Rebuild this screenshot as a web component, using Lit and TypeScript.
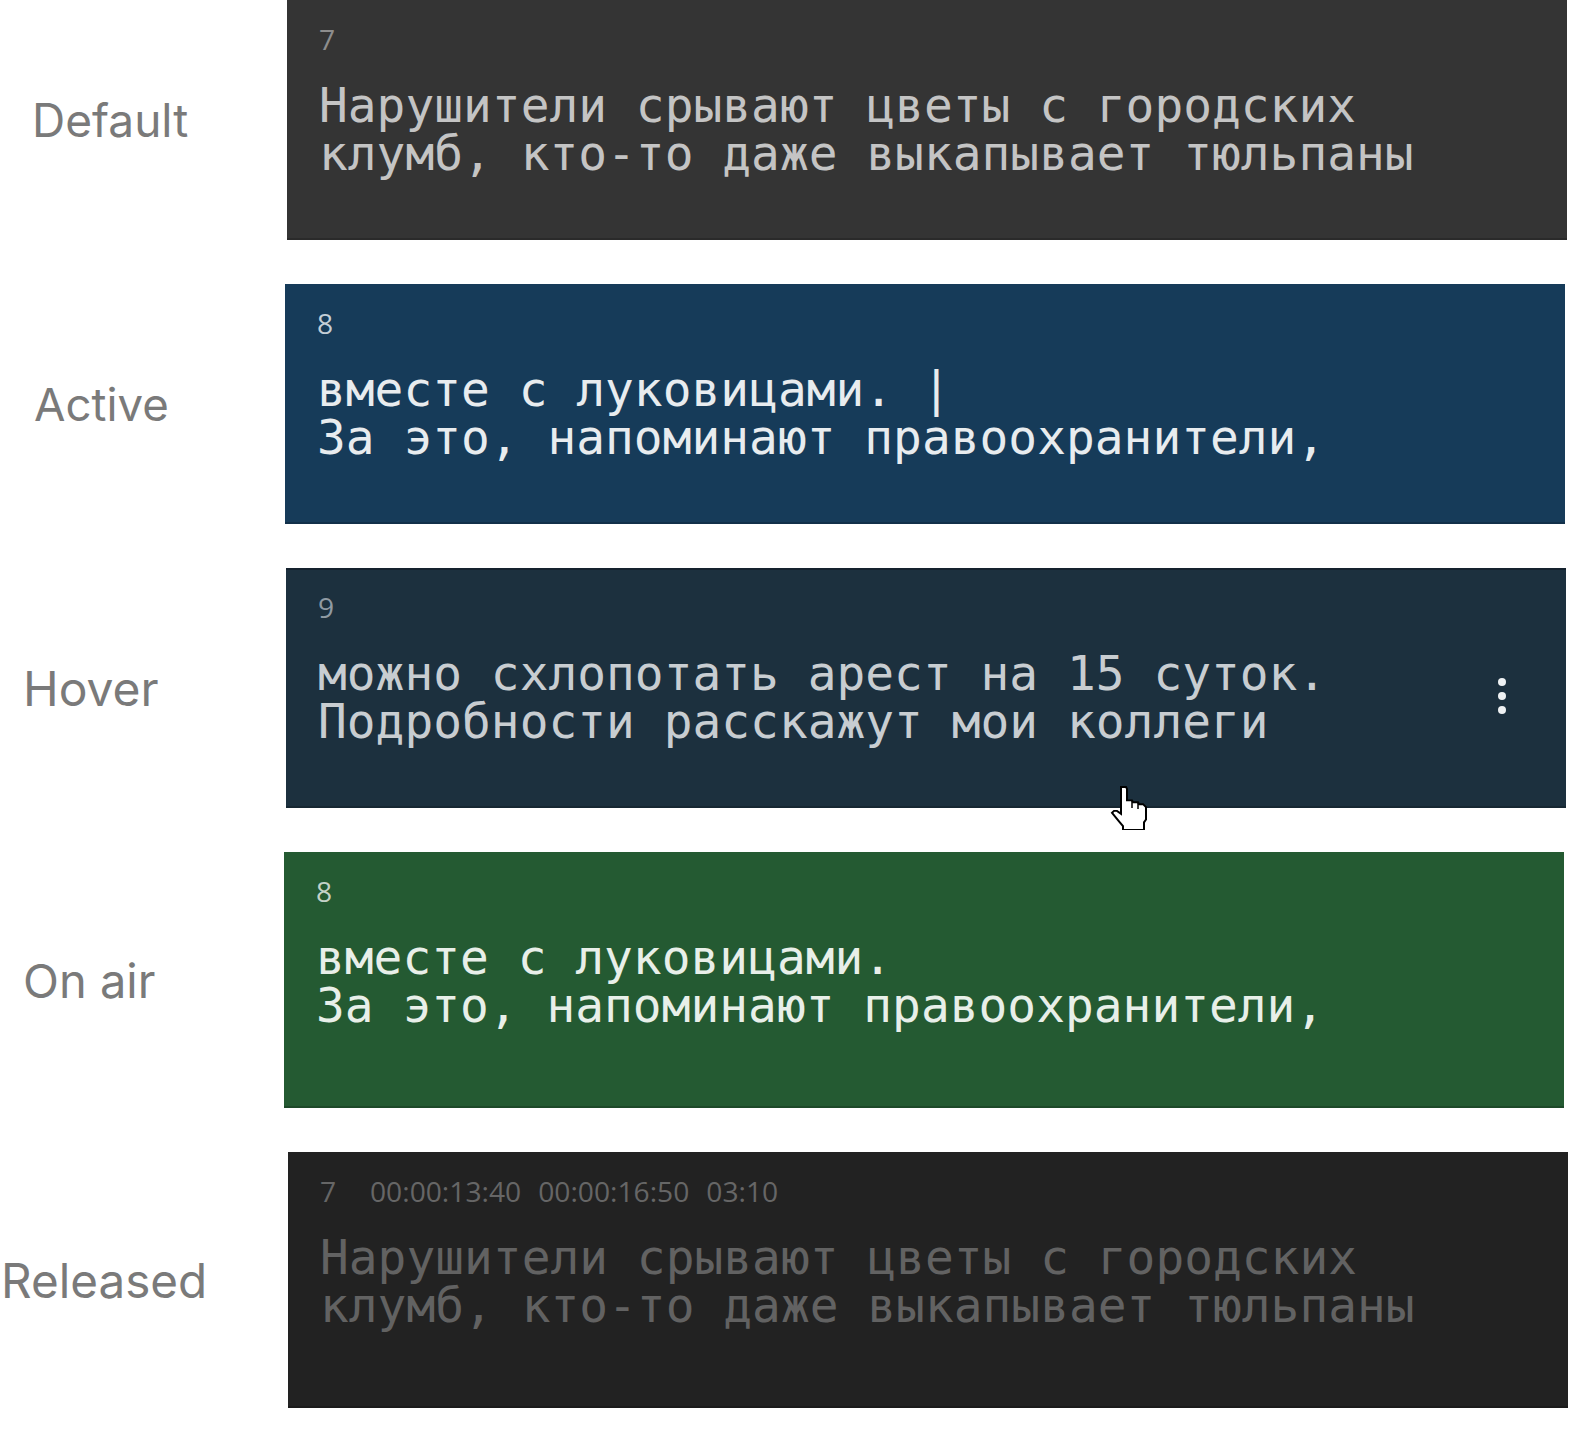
import { LitElement, html, css } from "lit";
import { customElement } from "lit/decorators.js";

const rows = [
  { k: "def", label: "Default", n: "7", lines: ["Нарушители срывают цветы с городских", "клумб, кто-то даже выкапывает тюльпаны"] },
  { k: "act", label: "Active", n: "8", lines: ["вместе с луковицами. |", "За это, напоминают правоохранители,"] },
  { k: "hov", label: "Hover", n: "9", lines: ["можно схлопотать арест на 15 суток.", "Подробности расскажут мои коллеги"] },
  { k: "air", label: "On air", n: "8", lines: ["вместе с луковицами.", "За это, напоминают правоохранители,"] },
  { k: "rel", label: "Released", n: "7", time: ["00:00:13:40", "00:00:16:50", "03:10"], lines: ["Нарушители срывают цветы с городских", "клумб, кто-то даже выкапывает тюльпаны"] },
];

@customElement("app-root")
export class AppRoot extends LitElement {
  static styles = css`
    :host { display: block; width: 1570px; height: 1454px; background: #fff; position: relative; overflow: hidden; }
    .row { display: flex; align-items: center; height: 240px; margin-bottom: 44px; position: relative; }
    .row.air, .row.rel { height: 256px; }
    .label { font-family: Inter, sans-serif; font-size: 46px; color: #7a7a7a; flex: none; box-sizing: border-box; }
    .panel { flex: none; width: 1280px; height: 100%; box-sizing: border-box; padding: 21px 32px 0; border-bottom: 2px solid rgba(0,0,0,.18); }
    .meta { display: flex; font-family: "Open Sans", sans-serif; font-size: 28.2px; line-height: 36px; height: 36px; margin-bottom: 25px; }
    .meta .n { width: 50px; }
    .meta .t { margin-right: 17px; }
    .text { font-family: "DejaVu Sans Mono", monospace; font-size: 47.8px; letter-spacing: 0.03px; line-height: 48px; white-space: pre; font-weight: 400; }
    .def .label { width: 287px; padding-left: 32px; }
    .act .label { width: 285px; padding-left: 34px; font-size: 45.6px; }
    .hov .label { width: 286px; padding-left: 23px; font-size: 48px; }
    .air .label { width: 284px; padding-left: 23px; font-size: 47px; }
    .rel .label { width: 288px; padding-left: 1px; font-size: 47.6px; }
    .def .panel { background: #343434; color: #c4c4c4; }
    .def .meta { color: #8d8d8d; }
    .act .panel { background: #163b59; color: #e8ecef; }
    .act .meta { color: #c4ced6; }
    .hov .panel { background: #1c303e; color: #c8cdd1; position: relative; border-top: 2px solid #15222e; }
    .hov .meta { color: #8f9aa3; margin-top: -2px; }
    .air .panel { background: #245a32; color: #e8efe9; }
    .air .meta { color: #c4d2c8; }
    .rel .panel { background: #222; color: #626262; }
    .rel .meta { color: #666; }
    .dots { position: absolute; right: 60px; top: 108px; display: flex; flex-direction: column; gap: 6px; }
    .dots i { width: 8px; height: 8px; border-radius: 50%; background: #eef1f3; display: block; }
    .cursor { position: absolute; left: 1110px; top: 786px; width: 38px; height: 44px; }
  `;
  render() {
    return html`
      ${rows.map(
        (r) => html`<div class="row ${r.k}">
          <div class="label">${r.label}</div>
          <div class="panel">
            <div class="meta">
              <span class="n">${r.n}</span>
              ${(r.time ?? []).map((t) => html`<span class="t">${t}</span>`)}
            </div>
            <div class="text">${r.lines.join("\n")}</div>
            ${r.k === "hov" ? html`<div class="dots"><i></i><i></i><i></i></div>` : ""}
          </div>
        </div>`
      )}
      <svg class="cursor" viewBox="0 0 38 46" preserveAspectRatio="none">
        <path d="M11 1h5l1 2v12h5l1 2h5l1 2h4l3 3v13l-2 3v8H13v-4l-4-5-7-9 2-2h3l4 3z" fill="#fff" stroke="#000" stroke-width="2"/>
        <path d="M22 15v8M28 17v7" stroke="#000" stroke-width="1.5" fill="none"/>
      </svg>
    `;
  }
}
